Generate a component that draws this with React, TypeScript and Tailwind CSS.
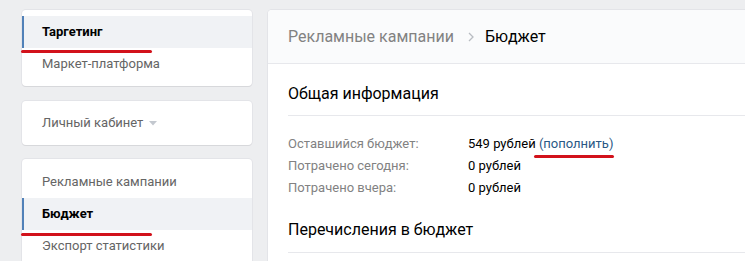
import React from 'react';

const cardShadow = 'bg-white rounded-[4px] shadow-[0_1px_0_0_#d7d8db,0_0_0_1px_#e3e4e8]';

const MenuItem: React.FC<{ label: string; active?: boolean; markTop?: string; caret?: boolean }> = ({
  label,
  active,
  markTop,
  caret,
}) => (
  <div
    className={
      'relative h-8 flex items-center pl-5 text-[13px] ' +
      (active ? 'bg-[#f0f2f5] border-l-2 border-[#5181b8] pl-[18px] font-bold text-black' : 'text-[#656565]')
    }
  >
    <span>{label}</span>
    {caret && (
      <svg width="8" height="5" viewBox="0 0 8 5" className="ml-[6px] mt-[1px]">
        <path d="M0 0h8L4 4.5z" fill="#c3c8cf" />
      </svg>
    )}
    {/* red annotation stroke */}
    {markTop && <div className={'absolute left-[-3px] w-[131px] h-[3px] rounded-full bg-[#d2121b] ' + markTop} />}
  </div>
);

const InfoRow: React.FC<{ label: string; children: React.ReactNode }> = ({ label, children }) => (
  <div className="flex h-[22px] items-center text-[13px]">
    <div className="w-[180px] text-[#828282]">{label}</div>
    <div className="text-black">{children}</div>
  </div>
);

export default function App() {
  return (
    <div
      className="w-[745px] h-[261px] overflow-hidden bg-[#edeef0] pt-[10px] pl-[22px] flex items-start gap-4"
      style={{ fontFamily: 'Roboto, "Open Sans", Arial, sans-serif' }}
    >
      <div className="w-[230px] shrink-0 flex flex-col">
        <div className={cardShadow + ' py-[6px]'}>
          <MenuItem label="Таргетинг" active markTop="top-[34px]" />
          <MenuItem label="Маркет-платформа" />
        </div>
        <div className={cardShadow + ' py-[6px] mt-[15px]'}>
          <MenuItem label="Личный кабинет" caret />
        </div>
        <div className={cardShadow + ' pt-[7px] pb-[20px] mt-[14px]'}>
          <MenuItem label="Рекламные кампании" />
          <MenuItem label="Бюджет" active markTop="top-[35px]" />
          <MenuItem label="Экспорт статистики" />
        </div>
      </div>

      <div className={cardShadow + ' flex-1 min-w-[500px] h-[300px]'}>
        <div className="h-[54px] bg-[#fafbfc] border-b border-[#e7e8ec] rounded-t-[4px] flex items-center pl-5 text-[16px]">
          <span className="text-[#828282]">Рекламные кампании</span>
          <svg width="6" height="10" viewBox="0 0 6 10" className="ml-[14px] mr-[11px]">
            <path d="M1 1l4 4-4 4" fill="none" stroke="#b8bcc2" strokeWidth="1.3" />
          </svg>
          <span className="text-black">Бюджет</span>
        </div>

        <div className="pl-5">
          <div className="h-[52px] flex items-end pb-[9px] border-b border-[#e7e8ec] text-[16px] text-black">
            Общая информация
          </div>
          <div className="pt-[17px]">
            <InfoRow label="Оставшийся бюджет:">
              549 рублей{' '}
              <span className="relative text-[#2a5885]">
                (пополнить)
                <span className="absolute left-[-5px] top-[19px] w-[80px] h-[3px] rounded-full bg-[#d2121b]" />
              </span>
            </InfoRow>
            <InfoRow label="Потрачено сегодня:">0 рублей</InfoRow>
            <InfoRow label="Потрачено вчера:">0 рублей</InfoRow>
          </div>
          <div className="h-[54px] flex items-end pb-[10px] border-b border-[#e7e8ec] text-[16px] text-black">
            Перечисления в бюджет
          </div>
        </div>
      </div>
    </div>
  );
}
